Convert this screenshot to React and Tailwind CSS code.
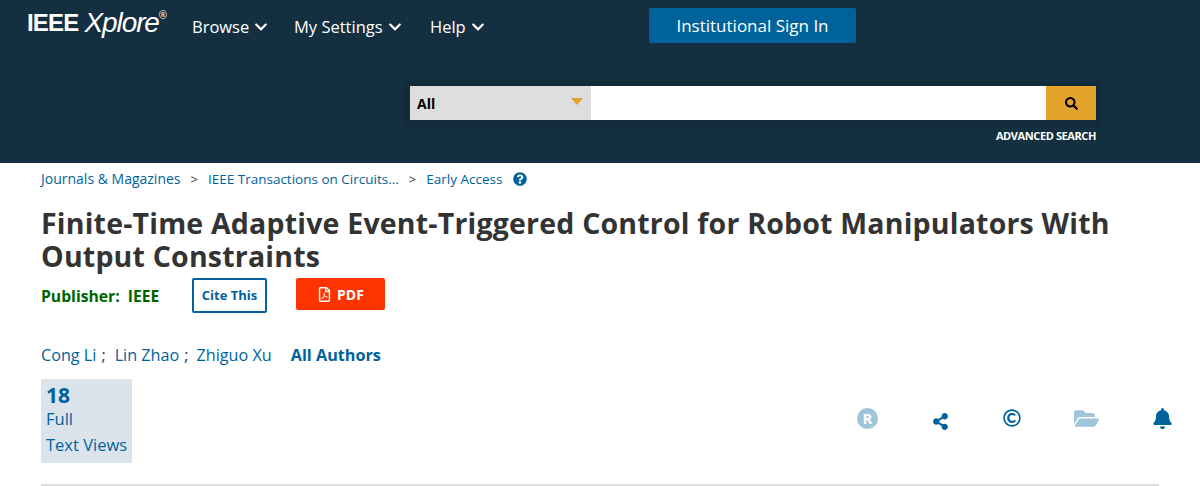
import React from "react";
import { FaChevronDown, FaSearch, FaQuestionCircle, FaRegFilePdf, FaShareAlt, FaRegCopyright, FaFolderOpen, FaBell } from "react-icons/fa";

const NavItem = ({ label, className }) => (
  <div className={"flex items-center gap-[5px] text-[16.5px] text-white " + className}>
    <span>{label}</span>
    <FaChevronDown className="text-[14px]" />
  </div>
);

const Sep = () => <span className="mx-[10px] text-[13px] text-[#333]">&gt;</span>;

export default function App() {
  return (
    <div className="h-[486px] overflow-hidden bg-white font-['Open_Sans','Noto_Sans',sans-serif]">
      <header className="h-[163px] bg-[#142f3f] pt-2">
        <div className="flex h-[35px] items-start">
          <div className="ml-[27px] flex w-[165px] items-start text-white">
            <span className="font-['Liberation_Sans',sans-serif] text-[24px] leading-[30px] font-bold tracking-[-0.8px]">IEEE</span>
            <span className="ml-[6px] font-['Liberation_Sans',sans-serif] text-[28px] leading-[30px] font-light italic tracking-[-1.1px]">Xplore</span>
            <span className="text-[10px] leading-[14px]">®</span>
          </div>
          <NavItem label="Browse" className="mt-[7px] w-[102px]" />
          <NavItem label="My Settings" className="mt-[7px] w-[136px]" />
          <NavItem label="Help" className="mt-[7px] w-[219px]" />
          <div className="flex h-[35px] w-[207px] items-center justify-center rounded-[2px] bg-[#00629b] text-[17px] text-white">
            Institutional Sign In
          </div>
        </div>
        <div className="mt-[38px] ml-[404px] w-[697px] rounded-[2px] bg-[#122b3a] pt-[5px] pr-[5px] pb-[7px] pl-[6px]">
          <div className="flex h-[34px] items-stretch">
            <div className="flex w-[181px] items-center justify-between bg-[#dedede] pr-[8px] pl-[7px] text-[14px] font-bold text-black">
              <span>All</span>
              <span className="mb-[4px] h-0 w-0 border-x-[6px] border-t-[7px] border-x-transparent border-t-[#e3a32b]" />
            </div>
            <div className="flex-1 bg-white" />
            <div className="flex w-[50px] items-center justify-center bg-[#e3a32b] text-black">
              <FaSearch className="text-[13px]" />
            </div>
          </div>
        </div>
        <div className="mt-[2px] ml-[403px] w-[693px] text-right text-[11px] leading-[14px] font-bold tracking-[-0.4px] text-white">
          ADVANCED SEARCH
        </div>
      </header>

      <main className="px-[41px]">
        <div className="flex h-[32px] items-center text-[13.5px] leading-[18px] text-[#00629b]">
          <span className="-mt-[1px] text-[14px]">Journals &amp; Magazines</span>
          <Sep />
          <span>IEEE Transactions on Circuits...</span>
          <Sep />
          <span>Early Access</span>
          <FaQuestionCircle className="ml-[11px] text-[14px]" />
        </div>
        <h1 className="mt-[12px] w-[1118px] text-[28.5px] leading-[33px] font-bold tracking-[0.2px] text-[#333]">
          Finite-Time Adaptive Event-Triggered Control for Robot Manipulators With Output Constraints
        </h1>
        <div className="mt-[5px] flex items-start">
          <div className="mt-[7px] w-[151px] text-[15.7px] font-bold text-[#006400]">Publisher:&nbsp; IEEE</div>
          <div className="flex h-[35px] w-[75px] items-center justify-center rounded-[2px] border-2 border-[#00629b] text-[13px] font-bold text-[#00629b]">
            Cite This
          </div>
          <div className="ml-[29px] flex h-[32px] w-[89px] items-center justify-center gap-[5px] rounded-[2px] bg-[#ff3300] text-[14px] font-bold text-white">
            <FaRegFilePdf className="text-[15px]" />
            PDF
          </div>
        </div>
        <div className="mt-[30px] flex h-[24px] items-center text-[16.2px] text-[#00629b]">
          <span>Cong Li</span>
          <span className="mr-[9px] ml-[5px] text-[#333]">;</span>
          <span>Lin Zhao</span>
          <span className="mr-[8px] ml-[5px] text-[#333]">;</span>
          <span>Zhiguo Xu</span>
          <span className="ml-[19px] font-bold">All Authors</span>
        </div>
        <div className="mt-[12px] flex items-center justify-between">
          <div className="h-[84px] w-[91px] rounded-[2px] bg-[#dae4ea] px-[5px] pt-[6px] text-[#00629b]">
            <div className="text-[21px] leading-[21px] font-bold">18</div>
            <div className="text-[16.5px] leading-[26px]">Full</div>
            <div className="text-[16.5px] leading-[26px] whitespace-nowrap">Text Views</div>
          </div>
          <div className="mr-[-14px] flex items-center gap-[53px] pb-[6px]">
            <span className="mr-[1px] flex h-[21px] w-[21px] items-center justify-center rounded-full bg-[#9fc5da] text-[15px] leading-none font-bold text-white">R</span>
            <FaShareAlt className="mt-[6px] mr-[1px] text-[17px] text-[#00629b]" />
            <FaRegCopyright className="text-[18px] text-[#00629b]" />
            <FaFolderOpen className="text-[25px] text-[#9fc5da]" />
            <FaBell className="text-[21px] text-[#00629b]" />
          </div>
        </div>
        <div className="mt-[21px] h-[2px] bg-[#dedede]" />
      </main>
    </div>
  );
}
